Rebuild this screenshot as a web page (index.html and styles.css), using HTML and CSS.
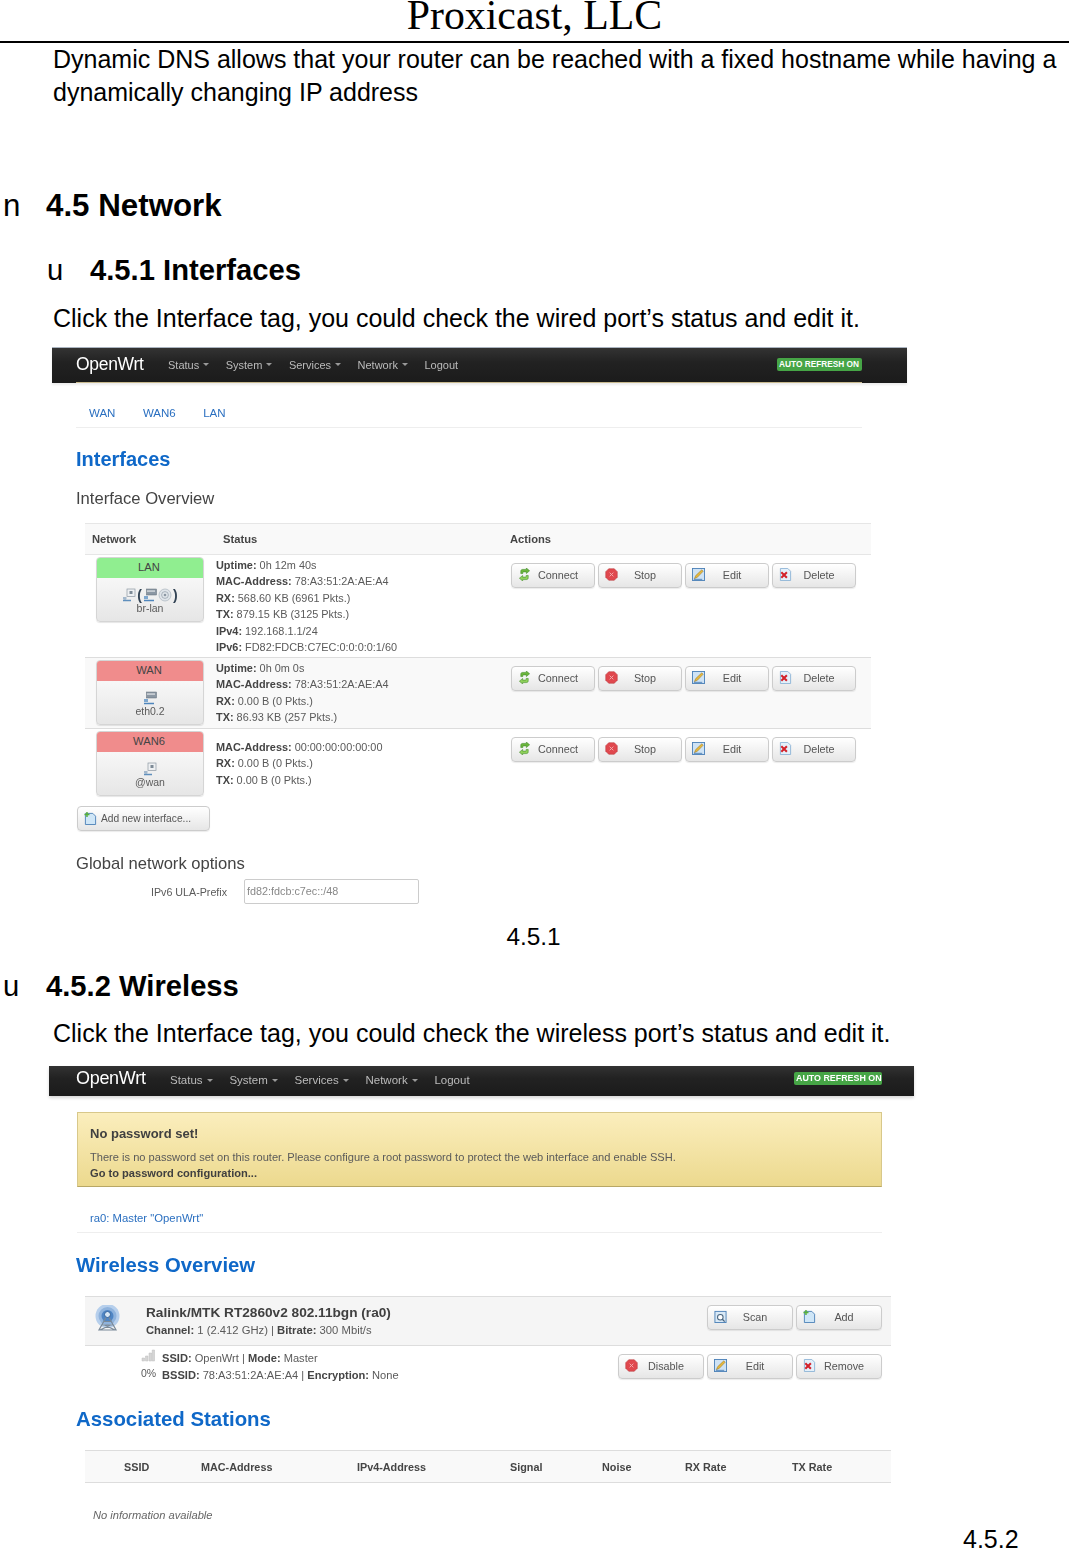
FILE: index.html
```html
<!DOCTYPE html>
<html lang="en">
<head>
<meta charset="utf-8">
<title>Proxicast, LLC</title>
<link rel="stylesheet" href="styles.css">
</head>
<body>
<svg class="defs" aria-hidden="true">
  <defs>
    <symbol id="i-connect" viewBox="0 0 14 14">
      <path d="M3 6V3.5C3 2 4 1.5 5 1.5H9V0L12.5 3 9 6V4.2H6C5.4 4.2 5.2 4.6 5.2 5V6Z" fill="#6bb53c" stroke="#3c8a22" stroke-width=".6"/>
      <path d="M11 8V10.5C11 12 10 12.5 9 12.5H5V14L1.5 11 5 8V9.8H8C8.6 9.8 8.8 9.4 8.8 9V8Z" fill="#8fd05a" stroke="#3c8a22" stroke-width=".6"/>
    </symbol>
    <symbol id="i-stop" viewBox="0 0 14 14">
      <path d="M4 .8H10L13.2 4V10L10 13.2H4L.8 10V4Z" fill="#e0484e" stroke="#b93a40" stroke-width=".6"/>
      <path d="M5 5L9 9M9 5L5 9" stroke="#f3b0b2" stroke-width="1"/>
    </symbol>
    <symbol id="i-edit" viewBox="0 0 14 14">
      <rect x=".5" y=".5" width="13" height="13" fill="#cfe3f5" stroke="#4d82b8"/>
      <path d="M2.5 11.5L4 8.2 10.5 2 12 3.5 5.8 10Z" fill="#e7b93d" stroke="#8a6a1e" stroke-width=".5"/>
      <path d="M2 12.2H11" stroke="#4d82b8"/>
    </symbol>
    <symbol id="i-delete" viewBox="0 0 14 14">
      <path d="M1.5 .5H9.5L12.5 3.5V13.5H1.5Z" fill="#e4f0fa" stroke="#8fb4d6"/>
      <path d="M2.5 4.5L8.5 10.5M8.5 4.5L2.5 10.5" stroke="#d3212a" stroke-width="2.2"/>
    </symbol>
    <symbol id="i-add" viewBox="0 0 14 14">
      <path d="M1.5 1.5H9.5L12.5 4.5V13.5H1.5Z" fill="#cfe6f7" stroke="#4d82b8"/>
      <path d="M3.2 0V5.4M.5 2.7H5.9" stroke="#58b03a" stroke-width="1.6"/>
    </symbol>
    <symbol id="i-scan" viewBox="0 0 14 14">
      <rect x="1" y="1.5" width="12" height="12" fill="#d9e9f6" stroke="#4d82b8"/>
      <circle cx="6.8" cy="7.8" r="3" fill="#fff" stroke="#47637d" stroke-width="1.1"/>
      <path d="M9 10L11.5 12.5" stroke="#47637d" stroke-width="1.4"/>
    </symbol>
    <symbol id="i-eth" viewBox="0 0 14 14">
      <rect x="3.5" y="1" width="10" height="6" fill="#8b97a3" stroke="#5f6b77" stroke-width=".5"/>
      <path d="M5 2.2V4M7 2.2V4M9 2.2V4M11 2.2V4" stroke="#fff" stroke-width="1"/>
      <path d="M1 12.5H11M3 8.5V11" stroke="#4f86bd" stroke-width="1.5"/>
      <rect x="1" y="8" width="4" height="3" fill="#7da7cf"/>
    </symbol>
    <symbol id="i-alias" viewBox="0 0 14 14">
      <rect x="5" y="1" width="8" height="7.5" fill="#eef0f2" stroke="#8d98a3" stroke-width=".7"/>
      <rect x="7.5" y="3" width="3" height="3" fill="#7d8a96"/>
      <path d="M1 12.5H9M3 9V11.5" stroke="#5f8fbd" stroke-width="1.3"/>
      <rect x="1" y="9" width="3.5" height="2.5" fill="#a3b8cc"/>
    </symbol>
    <symbol id="i-wifi" viewBox="0 0 14 14">
      <circle cx="7" cy="7" r="6" fill="#dfe5ea" stroke="#aab4bd" stroke-width=".7"/>
      <circle cx="7" cy="7" r="3.4" fill="none" stroke="#9aa6b1" stroke-width=".8"/>
      <circle cx="7" cy="7" r="1.3" fill="#8b97a3"/>
    </symbol>
    <symbol id="i-tower" viewBox="0 0 28 28">
      <circle cx="13.5" cy="11" r="12" fill="#b6cfec"/>
      <circle cx="13.5" cy="11" r="9" fill="#8fb3dd"/>
      <circle cx="13.5" cy="11" r="6" fill="#4f85c4"/>
      <circle cx="13.5" cy="9.5" r="3" fill="#d7e6f4" stroke="#2f609c"/>
      <path d="M12 12.5L5 25H22L15 12.5M8.5 20H18.5M10 16.5H17M6 25L16.5 20M21 25L10.5 20" fill="none" stroke="#7b8a99" stroke-width="1.2"/>
    </symbol>
    <symbol id="i-signal" viewBox="0 0 14 13">
      <path d="M1 12V9H3.5V12ZM4.5 12V7H7V12ZM8 12V4H10.5V12ZM11.2 12V1H13.5V12Z" fill="#d5d5d5" stroke="#bdbdbd" stroke-width=".5"/>
    </symbol>
  </defs>
</svg>

<div class="page">
  <header class="doc-head"><span class="doc-title">Proxicast, LLC</span></header>

  <p class="para">Dynamic DNS allows that your router can be reached with a fixed hostname while having a<br>dynamically changing IP address</p>

  <h1 class="head head-l1"><span class="bullet">n</span>4.5 Network</h1>
  <h2 class="head head-l2"><span class="bullet">u</span>4.5.1 Interfaces</h2>
  <p class="para para-one">Click the Interface tag, you could check the wired port’s status and edit it.</p>

  <section class="shot shot-a">
    <div class="nav nav-a">
      <span class="brand">OpenWrt</span>
      <span class="menu">Status<i class="caret"></i></span>
      <span class="menu">System<i class="caret"></i></span>
      <span class="menu">Services<i class="caret"></i></span>
      <span class="menu">Network<i class="caret"></i></span>
      <span class="menu">Logout</span>
      <span class="refresh">AUTO REFRESH ON</span>
    </div>
    <div class="body-a">
      <div class="tabs"><a>WAN</a><a>WAN6</a><a>LAN</a></div>
      <h2 class="title title-a">Interfaces</h2>
      <h3 class="sub">Interface Overview</h3>

      <div class="iface-table">
        <div class="iface-head"><b>Network</b><b>Status</b><b>Actions</b></div>

        <div class="iface-row row-lan">
          <div class="badge">
            <div class="badge-top up">LAN</div>
            <div class="badge-body">
              <div class="badge-icons">
                <svg class="ni"><use href="#i-alias"/></svg><span class="paren">(</span><svg class="ni"><use href="#i-eth"/></svg><svg class="ni"><use href="#i-wifi"/></svg><span class="paren">)</span>
              </div>
              <div class="badge-name">br-lan</div>
            </div>
          </div>
          <div class="status">
            <div><b>Uptime:</b> 0h 12m 40s</div>
            <div><b>MAC-Address:</b> 78:A3:51:2A:AE:A4</div>
            <div><b>RX:</b> 568.60 KB (6961 Pkts.)</div>
            <div><b>TX:</b> 879.15 KB (3125 Pkts.)</div>
            <div><b>IPv4:</b> 192.168.1.1/24</div>
            <div><b>IPv6:</b> FD82:FDCB:C7EC:0:0:0:0:1/60</div>
          </div>
          <div class="actions">
            <button class="btn"><svg class="bi"><use href="#i-connect"/></svg><span>Connect</span></button>
            <button class="btn"><svg class="bi"><use href="#i-stop"/></svg><span>Stop</span></button>
            <button class="btn"><svg class="bi"><use href="#i-edit"/></svg><span>Edit</span></button>
            <button class="btn"><svg class="bi"><use href="#i-delete"/></svg><span>Delete</span></button>
          </div>
        </div>

        <div class="iface-row row-wan">
          <div class="badge">
            <div class="badge-top down">WAN</div>
            <div class="badge-body">
              <div class="badge-icons"><svg class="ni"><use href="#i-eth"/></svg></div>
              <div class="badge-name">eth0.2</div>
            </div>
          </div>
          <div class="status">
            <div><b>Uptime:</b> 0h 0m 0s</div>
            <div><b>MAC-Address:</b> 78:A3:51:2A:AE:A4</div>
            <div><b>RX:</b> 0.00 B (0 Pkts.)</div>
            <div><b>TX:</b> 86.93 KB (257 Pkts.)</div>
          </div>
          <div class="actions">
            <button class="btn"><svg class="bi"><use href="#i-connect"/></svg><span>Connect</span></button>
            <button class="btn"><svg class="bi"><use href="#i-stop"/></svg><span>Stop</span></button>
            <button class="btn"><svg class="bi"><use href="#i-edit"/></svg><span>Edit</span></button>
            <button class="btn"><svg class="bi"><use href="#i-delete"/></svg><span>Delete</span></button>
          </div>
        </div>

        <div class="iface-row row-wan6">
          <div class="badge">
            <div class="badge-top down">WAN6</div>
            <div class="badge-body">
              <div class="badge-icons"><svg class="ni"><use href="#i-alias"/></svg></div>
              <div class="badge-name">@wan</div>
            </div>
          </div>
          <div class="status status-offset">
            <div><b>MAC-Address:</b> 00:00:00:00:00:00</div>
            <div><b>RX:</b> 0.00 B (0 Pkts.)</div>
            <div><b>TX:</b> 0.00 B (0 Pkts.)</div>
          </div>
          <div class="actions">
            <button class="btn"><svg class="bi"><use href="#i-connect"/></svg><span>Connect</span></button>
            <button class="btn"><svg class="bi"><use href="#i-stop"/></svg><span>Stop</span></button>
            <button class="btn"><svg class="bi"><use href="#i-edit"/></svg><span>Edit</span></button>
            <button class="btn"><svg class="bi"><use href="#i-delete"/></svg><span>Delete</span></button>
          </div>
        </div>
      </div>

      <button class="btn btn-new"><svg class="bi"><use href="#i-add"/></svg><span>Add new interface...</span></button>

      <h3 class="sub sub-global">Global network options</h3>
      <div class="field">
        <label class="field-label">IPv6 ULA-Prefix</label>
        <div class="field-input">fd82:fdcb:c7ec::/48</div>
      </div>
    </div>
  </section>

  <p class="caption">4.5.1</p>

  <h2 class="head head-l1b"><span class="bullet">u</span>4.5.2 Wireless</h2>
  <p class="para para-two">Click the Interface tag, you could check the wireless port’s status and edit it.</p>

  <section class="shot shot-b">
    <div class="nav nav-b">
      <span class="brand">OpenWrt</span>
      <span class="menu">Status<i class="caret"></i></span>
      <span class="menu">System<i class="caret"></i></span>
      <span class="menu">Services<i class="caret"></i></span>
      <span class="menu">Network<i class="caret"></i></span>
      <span class="menu">Logout</span>
      <span class="refresh">AUTO REFRESH ON</span>
    </div>
    <div class="body-b">
      <div class="alert">
        <div class="alert-title">No password set!</div>
        <div class="alert-text">There is no password set on this router. Please configure a root password to protect the web interface and enable SSH.</div>
        <div class="alert-link">Go to password configuration...</div>
      </div>
      <div class="tabs tabs-b"><a>ra0: Master "OpenWrt"</a></div>
      <h2 class="title title-b">Wireless Overview</h2>

      <div class="radio">
        <div class="radio-head">
          <svg class="tower"><use href="#i-tower"/></svg>
          <div class="radio-info">
            <div class="radio-name">Ralink/MTK RT2860v2 802.11bgn (ra0)</div>
            <div class="radio-sub"><b>Channel:</b> 1 (2.412 GHz) | <b>Bitrate:</b> 300 Mbit/s</div>
          </div>
          <div class="actions actions-b">
            <button class="btn"><svg class="bi"><use href="#i-scan"/></svg><span>Scan</span></button>
            <button class="btn"><svg class="bi"><use href="#i-add"/></svg><span>Add</span></button>
          </div>
        </div>
        <div class="radio-net">
          <div class="signal"><svg class="sig"><use href="#i-signal"/></svg><span>0%</span></div>
          <div class="net-info">
            <div><b>SSID:</b> OpenWrt | <b>Mode:</b> Master</div>
            <div><b>BSSID:</b> 78:A3:51:2A:AE:A4 | <b>Encryption:</b> None</div>
          </div>
          <div class="actions actions-b">
            <button class="btn"><svg class="bi"><use href="#i-stop"/></svg><span>Disable</span></button>
            <button class="btn"><svg class="bi"><use href="#i-edit"/></svg><span>Edit</span></button>
            <button class="btn"><svg class="bi"><use href="#i-delete"/></svg><span>Remove</span></button>
          </div>
        </div>
      </div>

      <h2 class="title title-c">Associated Stations</h2>
      <div class="assoc-head"><b>SSID</b><b>MAC-Address</b><b>IPv4-Address</b><b>Signal</b><b>Noise</b><b>RX Rate</b><b>TX Rate</b></div>
      <div class="assoc-empty">No information available</div>
    </div>
  </section>

  <p class="caption-end">4.5.2</p>
</div>
</body>
</html>
```

FILE: styles.css
```css
* { box-sizing: border-box; }
html, body { margin: 0; padding: 0; background: #fff; }
body { font-family: "Liberation Sans", Arial, sans-serif; color: #000; }
.defs { position: absolute; width: 0; height: 0; }
.page { width: 1069px; height: 1549px; overflow: hidden; }

.doc-head { height: 43px; border-bottom: 2px solid #000; text-align: center; overflow: hidden; }
.doc-title { display: block; font-family: "Liberation Serif", "Times New Roman", serif; font-size: 41.8px; line-height: 31px; }

.para { margin: 0; padding-left: 53px; font-size: 25px; line-height: 33px; white-space: nowrap; }
.para-one { margin-top: 12px; }
.para-two { margin-top: 11px; }

.head { margin: 0; line-height: 40px; font-weight: 700; display: flex; white-space: nowrap; }
.bullet { font-weight: 400; display: block; width: 43px; }
.head-l1 { margin-top: 77px; padding-left: 3px; font-size: 31.3px; }
.head-l2 { margin-top: 24px; padding-left: 47px; font-size: 29.2px; }
.head-l1b { margin-top: 14px; padding-left: 3px; font-size: 29.2px; }

.caption { margin: 7px 0 0; text-align: center; font-size: 24.4px; line-height: 30px; padding-right: 2px; }
.caption-end { margin: 0; padding-left: 963px; font-size: 25px; line-height: 20px; }

/* screenshots */
.shot { filter: blur(.35px); color: #5a5a5a; font-size: 12px; }
.shot b { color: #454545; }
.shot-a { margin: 13px 0 0 52px; width: 855px; height: 567px; }
.shot-b { margin: 16px 0 0 49px; width: 865px; height: 463px; }

.nav { display: flex; align-items: center; background: linear-gradient(#333, #222 40%, #1b1b1b); color: #bbb; font-size: 11px; white-space: nowrap; }
.nav-a { height: 35px; padding: 0 45px 2px 24px; background: linear-gradient(#c8b98e, #c8b98e) 24px 100% / 786px 1px no-repeat, linear-gradient(#333, #222 40%, #1b1b1b); box-shadow: 0 -1px 0 #aab4c0, 0 2px 2px rgba(0,0,0,.08); }
.nav-b { height: 30px; padding: 0 32px 2px 27px; box-shadow: 0 2px 3px rgba(0,0,0,.16); font-size: 11.5px; }
.brand { color: #fff; font-size: 17.5px; margin-right: 25px; width: 67px; letter-spacing: -.3px; }
.nav-b .brand { font-size: 18px; width: 69px; margin: 0 25px 3px 0; }
.menu { margin-right: 16.5px; display: flex; align-items: center; }
.nav-b .menu { margin-right: 16.8px; }
.caret { display: block; margin-left: 4px; border-style: solid; border-width: 3.5px 3px 0; border-color: #999 transparent transparent; }
.refresh { margin-left: auto; background: #46a546; color: #fff; font-size: 8.3px; font-weight: 700; line-height: 13px; height: 13px; padding: 0 2px; border-radius: 2px; position: relative; top: 0; }
.nav-a .refresh { width: 85px; }
.nav-b .refresh { width: 88px; font-size: 8.9px; padding: 0 2px; top: -2px; }

.body-a { padding: 0 0 0 24px; }
.body-b { padding: 0 0 0 27px; }
.tabs { height: 45px; width: 786px; border-bottom: 1px solid #eee; padding: 23px 0 0 13px; display: flex; gap: 27.5px; font-size: 11.5px; line-height: 15px; color: #2a6fc0; }

.title { margin: 0; color: #0f68c8; font-size: 20px; line-height: 24px; font-weight: 700; }
.title-a { margin-top: 19px; }
.sub { margin: 17px 0 0; font-size: 16.6px; line-height: 22px; font-weight: 400; color: #444; }

.iface-table { margin: 13px 0 0 9px; width: 786px; }
.iface-head { display: grid; grid-template-columns: 131px 287px 1fr; padding-left: 7px; height: 32px; align-items: center; background: #f9f9f9; border-top: 1px solid #e6e6e6; border-bottom: 1px solid #e6e6e6; font-size: 11.2px; }
.iface-row { display: grid; grid-template-columns: 131px 295px 1fr; border-bottom: 1px solid #ddd; }
.row-lan { height: 103px; }
.row-wan { height: 71px; background: #f9f9f9; }
.row-wan6 { height: 72px; border-bottom: 0; }

.badge { margin: 2px 0 0 11px; width: 108px; height: 65px; border: 1px solid #d5d5d5; border-radius: 4px; overflow: hidden; text-align: center; background: linear-gradient(#fff, #e6e6e6); box-shadow: 0 1px 1px rgba(0,0,0,.1); }
.badge-top { height: 20px; line-height: 19px; font-size: 11.2px; color: #444; padding-right: 2px; }
.up { background: #90ee90; }
.down { background: #f08c8c; }
.badge-body { padding-top: 8px; }
.badge-icons { height: 17px; display: flex; justify-content: center; align-items: center; gap: 1px; }
.ni { width: 14px; height: 14px; }
.paren { font-size: 14px; color: #345; font-weight: 700; line-height: 14px; }
.badge-name { font-size: 10.5px; line-height: 13px; margin-top: -1px; }

.status { padding-top: 2px; font-size: 10.9px; line-height: 16.4px; white-space: nowrap; }
.status-offset { padding-top: 10px; }
.actions { display: flex; gap: 3px; padding-top: 8px; padding-left: 0; }

.btn { display: flex; align-items: center; height: 25px; width: 84px; padding: 0 0 2px 6px; border: 1px solid #ccc; border-radius: 4px; background: linear-gradient(#fff, #e6e6e6); font: inherit; font-size: 10.8px; color: #555; box-shadow: 0 1px 1px rgba(0,0,0,.08); }
.btn span { flex: 1; text-align: center; padding-right: 9px; }
.bi { width: 13px; height: 13px; flex: none; }

.btn-new { margin: 5px 0 0 1px; width: 133px; font-size: 10.2px; padding: 0 0 0 6px; }
.btn-new span { padding: 0 0 0 4px; text-align: left; white-space: nowrap; }

.sub-global { margin-top: 22px; }
.field { display: flex; align-items: center; margin-top: 4px; }
.field-label { width: 168px; padding-left: 75px; font-size: 10.7px; white-space: nowrap; }
.field-input { width: 175px; height: 25px; border: 1px solid #ccc; border-radius: 2px; padding: 0 2px; line-height: 23px; font-size: 10.8px; color: #888; }

.alert { margin: 16px 0 0 1px; width: 805px; height: 75px; padding: 12px 12px 0; background: linear-gradient(#fbeebd, #ecd98e); border: 1px solid #d8c88a; border-bottom-color: #b8a765; font-size: 11.1px; line-height: 16px; white-space: nowrap; }
.alert-title { font-size: 13px; font-weight: 700; color: #404040; line-height: 18px; margin-bottom: 6px; }
.alert-link { font-weight: 700; color: #404040; }
.tabs-b { margin-left: 1px; width: 805px; height: 46px; padding-top: 24px; font-size: 11.3px; }
.title-b { margin-top: 20px; font-size: 20.3px; }
.radio { margin: 19px 0 0 9px; width: 806px; }
.radio-head { display: flex; height: 50px; background: #f5f5f5; border-top: 1px solid #ddd; border-bottom: 1px solid #ddd; }
.tower { width: 28px; height: 28px; margin: 8px 0 0 9px; flex: none; }
.radio-info { margin-left: 24px; flex: 1; white-space: nowrap; padding-top: 7px; }
.radio-name { font-size: 13.65px; line-height: 18px; font-weight: 700; color: #404040; }
.radio-sub { font-size: 11.25px; line-height: 16px; }
.actions-b { padding: 8px 9px 0 0; }
.actions-b .btn { width: 86px; }
.radio-net { display: flex; height: 60px; }
.signal { margin-left: 56px; width: 21px; flex: none; font-size: 10.5px; padding-top: 3px; }
.sig { width: 14px; height: 13px; display: block; margin-bottom: 5px; }
.net-info { flex: 1; font-size: 11.1px; line-height: 17px; padding-top: 4px; white-space: nowrap; }
.title-c { margin-top: 1px; font-size: 20.4px; }
.assoc-head { margin: 19px 0 0 9px; width: 806px; height: 33px; background: #f9f9f9; border-top: 1px solid #ddd; border-bottom: 1px solid #ddd; display: grid; grid-template-columns: 77px 156px 153px 92px 83px 107px 1fr; padding-left: 39px; align-items: center; font-size: 10.8px; }
.assoc-empty { margin: 25px 0 0 17px; font-size: 11.15px; font-style: italic; line-height: 14px; color: #666; }
```
